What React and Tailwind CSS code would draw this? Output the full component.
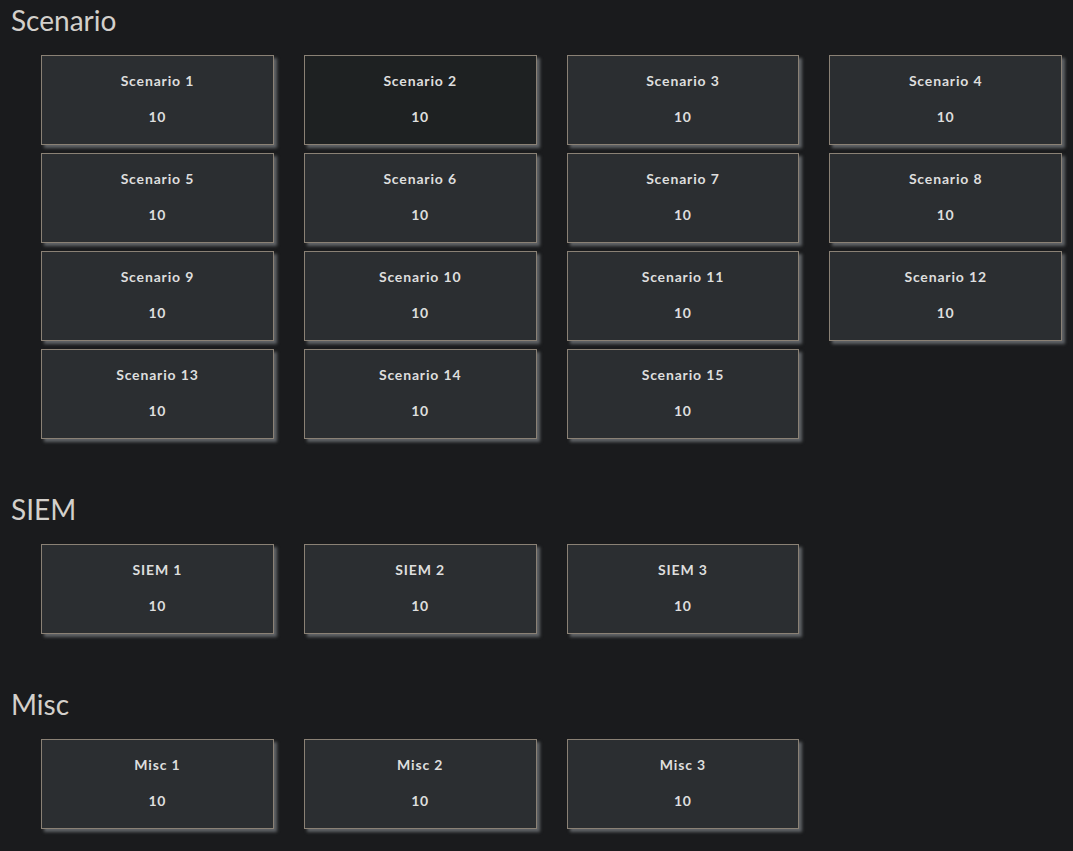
import React from 'react';

const sections = [
  { title: 'Scenario', items: Array.from({ length: 15 }, (_, i) => `Scenario ${i + 1}`) },
  { title: 'SIEM', items: ['SIEM 1', 'SIEM 2', 'SIEM 3'] },
  { title: 'Misc', items: ['Misc 1', 'Misc 2', 'Misc 3'] },
];

function Tile({ label, value, active }) {
  return (
    <div
      className={`border border-[#8a8175] shadow-[3px_3px_3px_rgba(120,124,128,0.75)] flex flex-col items-center pt-[15px] pb-[17px] gap-4 text-[14px] leading-5 font-bold tracking-[0.06em] text-[#dedede] ${
        active ? 'bg-[#1e2122]' : 'bg-[#2b2e31]'
      }`}
    >
      <span>{label}</span>
      <span>{value}</span>
    </div>
  );
}

export default function App() {
  return (
    <div className="min-h-screen bg-[#1a1b1d] px-[11px] pb-6 font-['Lato','Noto_Sans',sans-serif]">
      {sections.map((section, si) => (
        <section key={section.title} className={si === 0 ? '' : 'mt-[50px]'}>
          <h2 className="text-[28px] leading-[40px] text-[#d3d0cb] font-normal">{section.title}</h2>
          <div className="ml-[30px] mt-[15px] grid grid-cols-4 gap-x-[30px] gap-y-2">
            {section.items.map((item) => (
              <Tile key={item} label={item} value={10} active={item === 'Scenario 2'} />
            ))}
          </div>
        </section>
      ))}
    </div>
  );
}
